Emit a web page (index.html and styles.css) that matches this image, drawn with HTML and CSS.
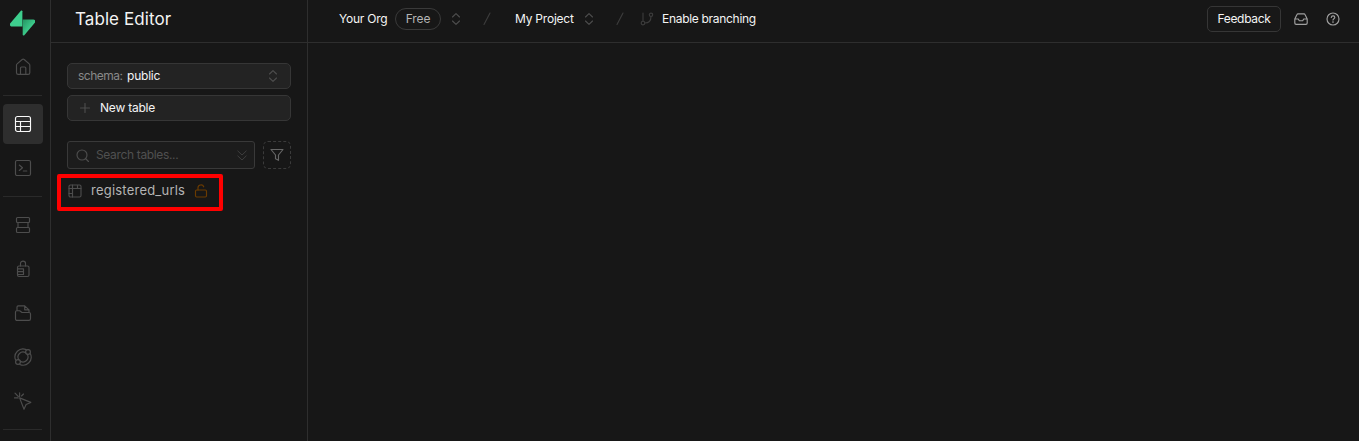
FILE: index.html
```html
<!DOCTYPE html>
<html lang="en">
<head>
<meta charset="utf-8">
<title>Table Editor</title>
<link rel="stylesheet" href="styles.css">
</head>
<body>
<div class="app">
  <nav class="rail">
    <a class="logo"><svg width="25" height="26" viewBox="0 0 25 26">
      <defs><linearGradient id="g" x1="0" y1="0" x2="1" y2="1"><stop offset="0" stop-color="#249361"/><stop offset=".6" stop-color="#3ecf8e"/></linearGradient></defs>
      <path d="M12.7 9.4H23.2c1.8 0 2.7 1.9 1.6 3.3L14.3 25.2c-.6.7-1.6.3-1.6-.5z" fill="url(#g)"/>
      <path d="M12.4 16.5H1.9C.1 16.500-.7 14.600.300 13.200L10.900.8c.6-.7 1.500-.3 1.500.5z" fill="#3ecf8e"/>
    </svg></a>
    <a class="item"><svg class="icon" width="18" height="18" viewBox="0 0 18 18"><path d="M2.500 7.200c0-.6.2-1 .6-1.300L8.200 1.500c.6-.5 1.400-.5 2 0l5 4.400c.4.3.6.8.6 1.300v7.500c0 1-.7 1.700-1.700 1.700H4.200c-1 0-1.700-.7-1.700-1.700zM6.500 16.200V10c0-.6.4-1 1-1h3.300c.6 0 1 .4 1 1v6.200"/></svg></a>
    <hr>
    <a class="item active"><svg class="icon" width="18" height="18" viewBox="0 0 18 18"><rect x="1.500" y="1.500" width="15" height="15" rx="2"/><path d="M1.500 6.500h15M1.500 11.500h15M6.500 6.500v10"/></svg></a>
    <a class="item"><svg class="icon" width="18" height="18" viewBox="0 0 18 18"><rect x="1.500" y="1.500" width="15" height="15" rx="1.500"/><path d="M5.300 6l3.200 2.700-3.200 2.800M9.300 12h3.500"/></svg></a>
    <hr>
    <a class="item"><svg class="icon" width="18" height="18" viewBox="0 0 18 18"><rect x="2.500" y="1.500" width="13" height="5" rx="1"/><rect x="2.500" y="11.500" width="13" height="5" rx="1"/><path d="M4 6.500v5M14 6.500v5"/></svg></a>
    <a class="item"><svg class="icon" width="18" height="18" viewBox="0 0 18 18"><rect x="3.500" y="6" width="11.500" height="10.500" rx="1.500"/><path d="M6.500 6V3.300c0-3 5-3 5 0V6M3.500 8.800h6v5.700h-6M3.500 11.600h6"/></svg></a>
    <a class="item"><svg class="icon" width="18" height="18" viewBox="0 0 18 18"><path d="M3 6.500V3c0-.7.5-1.200 1.200-1.200h6.500l4.300 4v2.500M10.700 1.800v4H15M1.500 8c0-.8.4-1.300 1.200-1.300h3L8 8.500h7c1 0 1.500.5 1.500 1.300v5c0 1-.6 1.600-1.600 1.600H3.100c-1 0-1.600-.6-1.600-1.600z"/></svg></a>
    <a class="item"><svg class="icon" width="18" height="18" viewBox="0 0 18 18"><path d="M12.200 1.600A8 8 0 0 0 1.600 12M16.400 5.800A8 8 0 0 1 5.800 16.400M11.700 4.800A5 5 0 0 0 4.800 11.700M13.200 6.300a5 5 0 0 1-6.900 6.900"/><circle cx="14" cy="4" r="2.400"/><circle cx="4" cy="14" r="2.400"/></svg></a>
    <a class="item"><svg class="icon" width="18" height="18" viewBox="0 0 18 18"><path d="M5.600 5.900l11.200 4.500-4.700 2.100-2.100 4.700zM5.600.8v3.600M.5 5.900h3.700M1 1.200l3.300 3.300M7.500 4l2-2"/></svg></a>
    <hr>
  </nav>
  <aside class="panel">
    <header class="bar title"><span>Table Editor</span></header>
    <div class="tools">
      <button class="field schema"><span class="muted">schema:</span><span class="value">public</span><svg class="icon updown" width="10" height="14" viewBox="0 0 10 14"><path d="M1.500 5L5 1.600 8.500 5M1.500 9L5 12.400 8.500 9"/></svg></button>
      <button class="field new"><svg class="icon" width="10" height="10" viewBox="0 0 10 10"><path d="M5 .5v9M.5 5h9"/></svg><span>New table</span></button>
      <div class="filters">
        <div class="search"><svg class="icon" width="13" height="13" viewBox="0 0 13 13"><circle cx="6" cy="6" r="5"/><path d="M9.500 9.500l3 3"/></svg><span>Search tables...</span><svg class="icon chev" width="10" height="11" viewBox="0 0 10 11"><path d="M.8 1L5 5 9.200 1M.8 6L5 10l4.200-4"/></svg></div>
        <button class="filter"><svg class="icon" width="14" height="14" viewBox="0 0 14 14"><path d="M1 1.500h12L8.500 7v5.300L5.500 10.700V7z"/></svg></button>
      </div>
    </div>
    <div class="row">
      <svg class="icon" width="14" height="14" viewBox="0 0 14 14"><rect x="1" y="1" width="12" height="12" rx="1.500"/><path d="M1 4.500h12M1 9.500h3.500M4.500 1v12M9.500 4.500v-3"/></svg>
      <span>registered_urls</span>
      <svg class="icon lock" width="14" height="14" viewBox="0 0 14 14"><rect x="1.500" y="6" width="11" height="7" rx="1.200"/><path d="M4 6V3.700c0-3.300 4.800-3.700 5.700-.9"/></svg>
    </div>
  </aside>
  <main class="main">
    <header class="bar top">
      <span class="org">Your Org</span><span class="pill">Free</span>
      <svg class="icon ud1" width="10" height="14" viewBox="0 0 10 14"><path d="M1.500 5L5 1.600 8.500 5M1.500 9L5 12.400 8.500 9"/></svg>
      <svg class="icon slash s1" width="8" height="14" viewBox="0 0 8 14"><path d="M1 12.500L7 1"/></svg>
      <span class="project">My Project</span>
      <svg class="icon ud2" width="10" height="14" viewBox="0 0 10 14"><path d="M1.500 5L5 1.600 8.500 5M1.500 9L5 12.400 8.500 9"/></svg>
      <svg class="icon slash s2" width="8" height="14" viewBox="0 0 8 14"><path d="M1 12.500L7 1"/></svg>
      <svg class="icon branch" width="14" height="14" viewBox="0 0 14 14"><path d="M3 1v8M11 4.500C11 8.500 8.500 11 4.800 11"/><circle cx="11" cy="2.800" r="1.700"/><circle cx="3" cy="11" r="1.800"/></svg>
      <span class="enable">Enable branching</span>
      <button class="feedback"><span>Feedback</span></button>
      <svg class="icon util inbox" width="14" height="14" viewBox="0 0 14 14"><path d="M.8 7L3 2.500c.2-.5.5-.7 1-.7h6c.5 0 .8.2 1 .7L13.200 7v4c0 .8-.5 1.300-1.300 1.300H2.100C1.300 12.300.8 11.800.8 11zM.8 7h3.500l1 1.700h3.400l1-1.700h3.500"/></svg>
      <svg class="icon util help" width="14" height="14" viewBox="0 0 14 14"><circle cx="7" cy="7" r="6"/><path d="M5.300 5.500c.3-2.300 3.500-1.900 3.500 0C8.800 6.700 7 6.800 7 8.100M7 9.600v.8"/></svg>
    </header>
  </main>
  <div class="highlight"></div>
</div>
</body>
</html>
```
FILE: styles.css
```css
* { box-sizing: border-box; }
body { margin: 0; background: #171717; color: #f4f4f4; font: 12px/16px Inter, "Liberation Sans", sans-serif; letter-spacing: -.22px; }
.app { position: relative; display: flex; height: 441px; overflow: hidden; }
button { font: inherit; color: inherit; letter-spacing: inherit; margin: 0; padding: 0; }
span { white-space: nowrap; }
.icon { display: block; flex: none; fill: none; stroke: #4d4d4d; stroke-width: 1.15; stroke-linecap: round; stroke-linejoin: round; }

.rail { width: 51px; flex: none; border-right: 1px solid #2e2e2e; padding: 0 7px 0 3px; display: flex; flex-direction: column; gap: 4px; }
.logo { height: 43px; flex: none; padding: 10px 0 0 7px; }
.logo svg { display: block; }
.item { height: 40px; flex: none; display: flex; align-items: center; justify-content: center; border-radius: 4px; }
.active { background: #2e2e2e; }
.active .icon { stroke: #fafafa; }
.rail hr { width: 39px; height: 1px; flex: none; border: 0; margin: 4px 0; background: #2a2a2a; }

.panel { width: 257px; flex: none; border-right: 1px solid #2e2e2e; }
.bar { height: 43px; border-bottom: 1px solid #2e2e2e; display: flex; align-items: center; padding-bottom: 4px; }
.title { padding-left: 24px; font-size: 17px; letter-spacing: .08px; }
.tools { padding: 20px 16px 0; display: flex; flex-direction: column; gap: 6px; }
.field { height: 26px; display: flex; align-items: center; background: #232323; border: 1px solid #363636; border-radius: 5px; padding: 0 12px 0 10px; }
.muted { width: 49px; text-align: left; color: #898989; letter-spacing: -.5px; }
.updown { margin-left: auto; }
.new { padding-left: 12px; }
.new .icon { margin-right: 10px; }
.filters { display: flex; gap: 8px; margin-top: 14px; }
.search { width: 188px; height: 28px; display: flex; align-items: center; padding: 0 7px 0 8px; background: #1c1c1c; border: 1px solid #393939; border-radius: 3px; color: #505050; }
.search span { margin-left: 7px; letter-spacing: -.35px; }
.chev { margin-left: auto; stroke: #3e3e3e; stroke-width: 1; }
.filter { width: 28px; height: 28px; display: flex; align-items: center; justify-content: center; background: none; border: 1px dashed #3b3b3b; border-radius: 5px; }
.filter .icon { stroke: #666; }
.row { height: 28px; margin-top: 8px; padding-left: 17px; display: flex; align-items: center; font-size: 13px; letter-spacing: .22px; color: #b4b4b4; }
.row span { width: 103px; margin-left: 9px; padding-bottom: 2px; }
.row .lock { stroke: #6b3b00; }

.main { flex: 1; min-width: 0; }
.top { padding-left: 31px; padding-right: 19px; }
.org { width: 56px; }
.pill { width: 46px; height: 22px; border: 1px solid #3a3a3a; border-radius: 11px; color: #b4b4b4; display: flex; align-items: center; justify-content: center; letter-spacing: -.1px; }
.ud1 { margin-left: 10px; }
.s1 { margin-left: 22px; }
.project { width: 59px; margin-left: 24px; }
.ud2 { margin-left: 10px; }
.s2 { margin-left: 22px; }
.branch { margin-left: 16px; }
.enable { margin-left: 8px; letter-spacing: -.3px; }
.slash, .branch { stroke: #3c3c3c; }
.feedback { margin-left: auto; width: 74px; height: 26px; border: 1px solid #363636; border-radius: 5px; background: #181818; letter-spacing: -.3px; }
.util { stroke: #a0a0a0; }
.inbox { margin-left: 13px; }
.help { margin-left: 18px; }
.highlight { position: absolute; left: 57px; top: 174px; width: 166px; height: 37px; border: 4px solid #f00; border-radius: 2px; }
```
